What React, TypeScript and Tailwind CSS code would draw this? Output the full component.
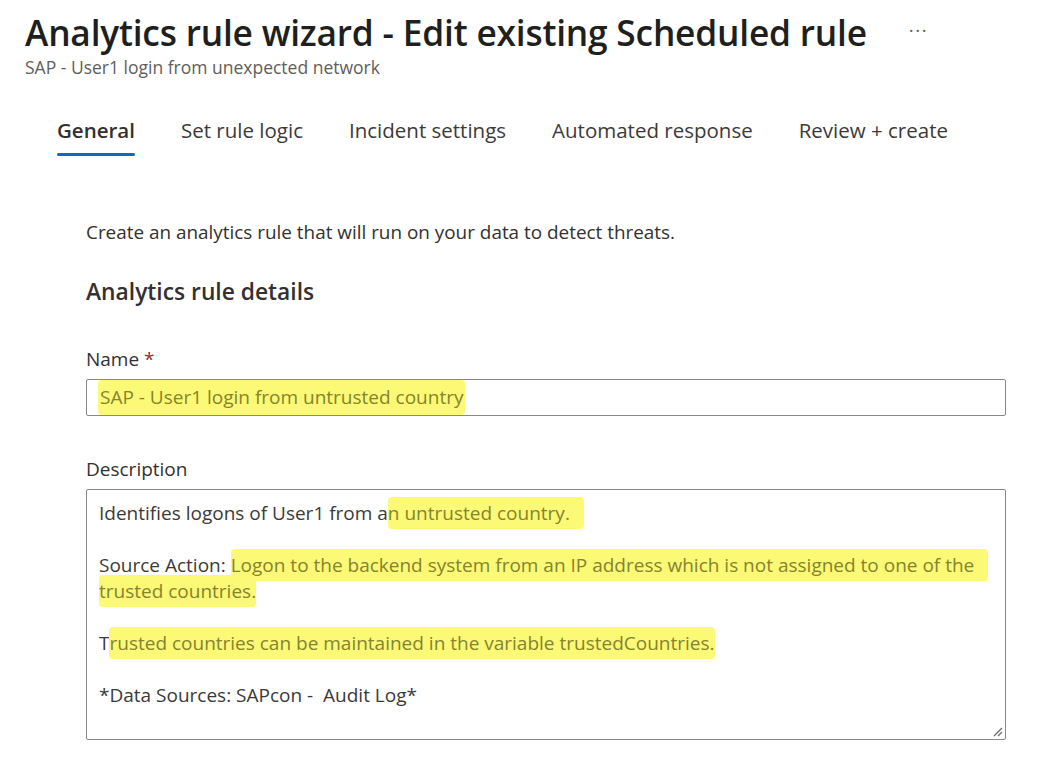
import React from "react";

const tabs = ["General", "Set rule logic", "Incident settings", "Automated response", "Review + create"];

function Hl({ children, className = "" }: { children: React.ReactNode; className?: string }) {
  return (
    <span className={"bg-[#fbf975] text-[#85842f] rounded-[4px] py-[3px] " + className}>{children}</span>
  );
}

export default function App() {
  return (
    <div className="w-[1042px] h-[768px] bg-white text-[#323130] font-['Open_Sans',sans-serif] overflow-hidden">
      <div className="pl-[25px] pt-[10px]">
        <div className="flex items-center">
          <h1 className="text-[35.3px] leading-[44px] font-semibold text-[#201f1e] tracking-[-0.2px]">
            Analytics rule wizard - Edit existing Scheduled rule
          </h1>
          <span className="ml-[42px] text-[19px] text-[#605e5c] -mt-[4px] tracking-[1.5px]">···</span>
        </div>
        <div className="text-[17.5px] leading-[22px] text-[#605e5c] mt-[2px]">
          SAP - User1 login from unexpected network
        </div>
      </div>

      <div className="flex pl-[57px] mt-[39px] gap-[46px]">
        {tabs.map((t, i) => (
          <div key={t} className="flex flex-col">
            <span className={"text-[20.5px] leading-[26px] " + (i === 0 ? "font-semibold text-[#323130]" : "text-[#3b3a39]")}>
              {t}
            </span>
            <span className={"mt-[10px] h-[3px] rounded-full " + (i === 0 ? "bg-[#0f6cbd]" : "bg-transparent")} />
          </div>
        ))}
      </div>

      <div className="pl-[86px] pr-[36px] mt-[63px]">
        <p className="text-[18.9px] leading-[26px]">Create an analytics rule that will run on your data to detect threats.</p>
        <h2 className="mt-[33px] text-[22.8px] leading-[28px] font-semibold text-[#323130]">Analytics rule details</h2>

        <div className="mt-[41px] text-[19px] leading-[24px]">
          Name <span className="text-[#a4262c]">*</span>
        </div>
        <div className="mt-[8px] h-[37px] border border-[#8a8886] rounded-[2px] flex items-center pl-[11px] text-[19px]">
          <Hl className="px-[2px]">SAP - User1 login from untrusted country</Hl>
        </div>

        <div className="mt-[41px] text-[19px] leading-[24px]">Description</div>
        <div className="relative mt-[8px] h-[251px] border border-[#8a8886] rounded-[2px] pl-[12px] pt-[10px] text-[19px] leading-[26px] text-[#3b3a39]">
          <p>
            Identifies logons of User1 from a<Hl className="pr-[14px]">n untrusted country.</Hl>
          </p>
          <p className="mt-[26px]">
            Source Action: <Hl className="pr-[14px]">Logon to the backend system from an IP address which is not assigned to one of the</Hl>
            <br />
            <Hl>trusted countries.</Hl>
          </p>
          <p className="mt-[26px]">
            T<Hl>rusted countries can be maintained in the variable trustedCountries.</Hl>
          </p>
          <p className="mt-[26px]">*Data Sources: SAPcon -&nbsp; Audit Log*</p>
          <svg className="absolute right-[2px] bottom-[2px]" width="12" height="12" viewBox="0 0 12 12">
            <path d="M11 3 L3 11 M11 7 L7 11" stroke="#6b6b6b" strokeWidth="1.3" fill="none" />
          </svg>
        </div>
      </div>
    </div>
  );
}
